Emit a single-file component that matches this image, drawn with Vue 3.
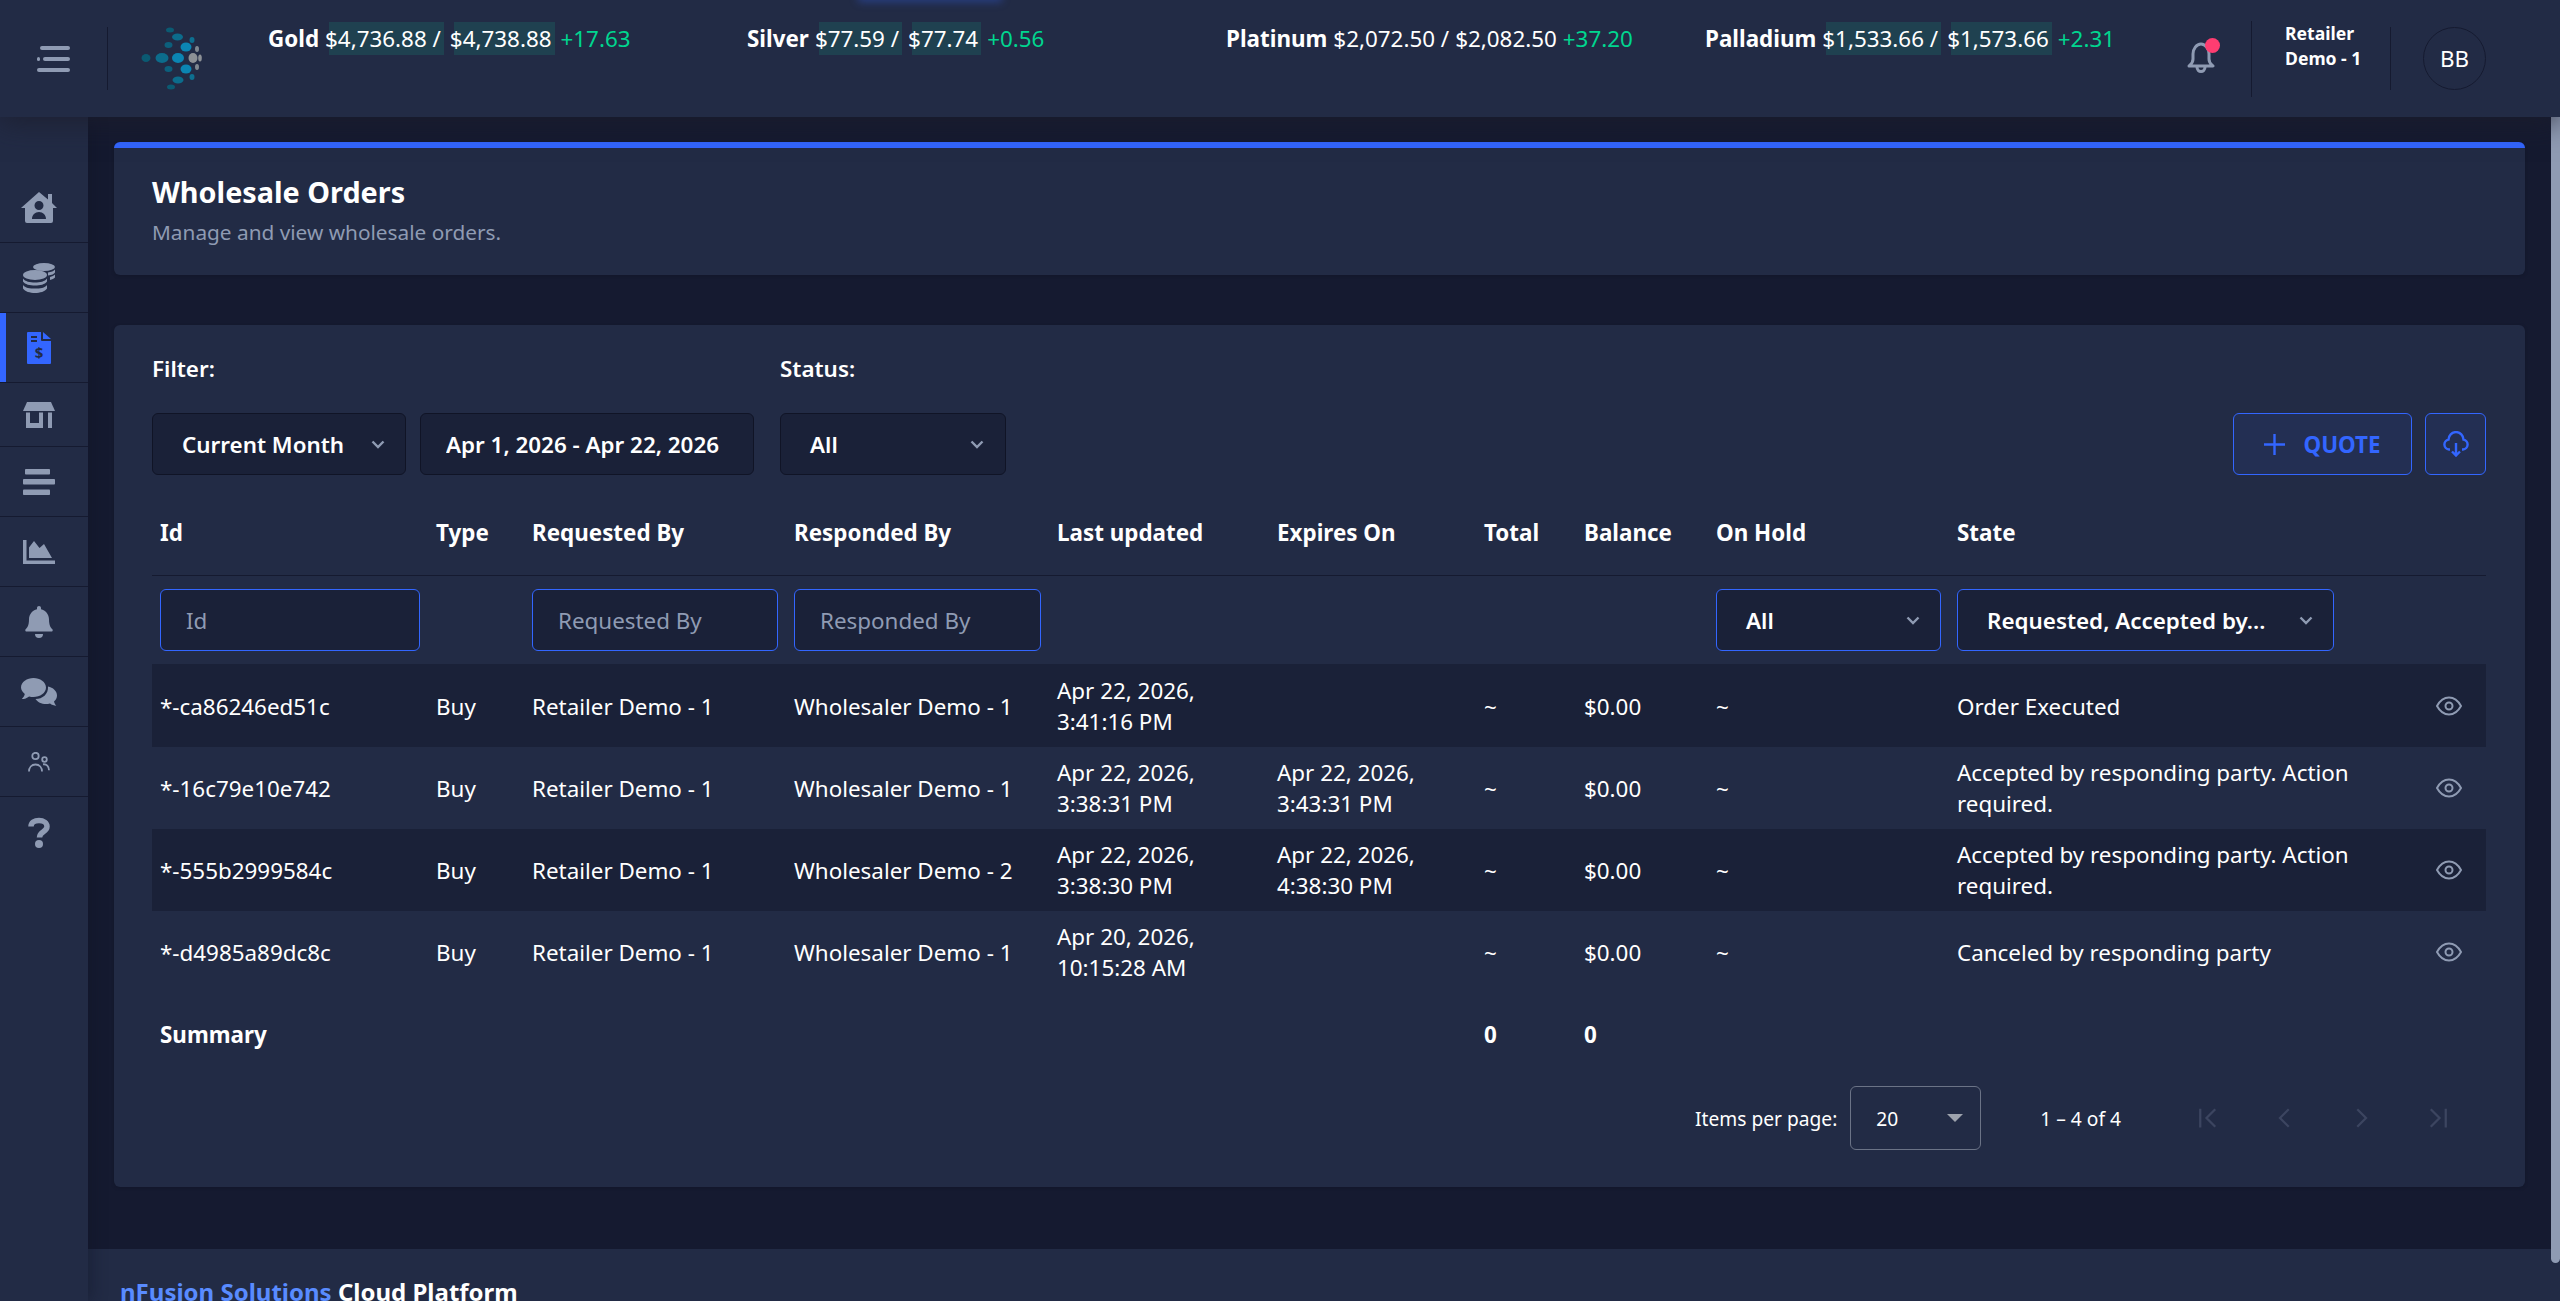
<template>
  <div class="app">
    <header class="topbar">
      <div class="topbar-glow"></div>
      <div class="menu-cell">
        <svg class="menu-icon" viewBox="0 0 33 26" width="33" height="26">
          <rect x="3" y="0" width="30" height="4" rx="2" />
          <rect x="0" y="11" width="3" height="4" rx="1.5" />
          <rect x="6" y="11" width="27" height="4" rx="2" />
          <rect x="0" y="22" width="33" height="4" rx="2" />
        </svg>
      </div>
      <svg class="logo" viewBox="0 0 64 66" width="64" height="66">
        <ellipse v-for="(d, i) in logoDots" :key="i" :cx="d[0]" :cy="d[1]" :rx="d[2]" :ry="d[3]" :fill="d[4]" />
      </svg>
      <div class="ticker">
        <div v-for="t in tickers" :key="t.name" class="ticker-item">
          <b>{{ t.name }}</b>
          <span :class="{ hl: t.hl }">{{ t.bid }} /</span>
          <span :class="{ hl: t.hl }">{{ t.ask }}</span>
          <span class="up">{{ t.change }}</span>
        </div>
      </div>
      <div class="bell-cell">
        <svg viewBox="0 0 28 31" width="28" height="31" fill="none" stroke="#8f9bb3" stroke-width="3" stroke-linejoin="round">
          <path d="M2 24c2-2 4-3 4-7v-5c0-5 3.500-10 8-10s8 5 8 10v5c0 4 2 5 4 7z" />
          <path d="M10 25c0 3 2 4.500 4 4.500s4-1.500 4-4.500" />
        </svg>
        <span class="bell-dot"></span>
      </div>
      <div class="user-name"><div>Retailer Demo - 1</div></div>
      <div class="avatar-cell">
        <div class="avatar">BB</div>
      </div>
    </header>

    <div class="body">
      <nav class="sidebar">
        <a v-for="item in navItems" :key="item.id" class="nav-item" :class="[{ active: item.id === 'orders' }, item.id]">
          <!-- home -->
          <svg v-if="item.id === 'home'" viewBox="0 0 36 31" width="36" height="31">
            <path fill-rule="evenodd" d="M18 0 27 7.500V2h4v9l5 5h-4v13a2 2 0 0 1-2 2H6a2 2 0 0 1-2-2V16H0zM18 9a4.500 4.500 0 1 0 0 9 4.500 4.500 0 0 0 0-9zM11 27h14c0-4-3-7-7-7s-7 3-7 7z" />
          </svg>
          <!-- coins -->
          <svg v-else-if="item.id === 'coins'" viewBox="0 0 32 30" width="32" height="30">
            <ellipse cx="21" cy="4" rx="11" ry="4" />
            <path d="M25 9.500c3-.5 6-1.500 7-3v3c-1 1.500-3 2.500-7 3zM27 14c2-.5 4-1.500 5-2.500v3c-1 1-3 2-5 2.500z" />
            <ellipse cx="12" cy="12" rx="12" ry="5" />
            <path d="M0 15.500c2 3 7 4 12 4s10-1 12-4v3c-2 3-7 4-12 4s-10-1-12-4zM0 22c2 3 7 3.500 12 3.500s10-.5 12-3.500v3.500c-2 3-7 4.500-12 4.500S2 28.500 0 25.500z" />
          </svg>
          <!-- invoice -->
          <svg v-else-if="item.id === 'orders'" viewBox="0 0 24 32" width="24" height="32" class="invoice">
            <path d="M0 1a1 1 0 0 1 1-1h13v8a1 1 0 0 0 1 1h9v22a1 1 0 0 1-1 1H1a1 1 0 0 1-1-1z" />
            <path d="M16 0l8 7h-8z" />
            <rect x="4" y="4" width="6" height="2" fill="#222b45" />
            <rect x="4" y="8" width="6" height="2" fill="#222b45" />
            <text x="12" y="26" text-anchor="middle" font-size="15" font-weight="700" fill="#222b45">$</text>
          </svg>
          <!-- store -->
          <svg v-else-if="item.id === 'store'" viewBox="0 0 32 26" width="32" height="26">
            <path d="M4 0h24l4 9H0z" />
            <path fill-rule="evenodd" d="M3 10.500h17V26H3zM7 10.500V21h9V10.500z" />
            <rect x="25" y="10.500" width="4" height="15.500" />
          </svg>
          <!-- list -->
          <svg v-else-if="item.id === 'list'" viewBox="0 0 32 26" width="32" height="26">
            <rect x="2" y="0" width="25" height="5.600" rx=".8" />
            <rect x="0" y="10" width="32" height="5.600" rx=".8" />
            <rect x="0" y="20.400" width="27" height="5.600" rx=".8" />
          </svg>
          <!-- chart -->
          <svg v-else-if="item.id === 'chart'" viewBox="0 0 32 24" width="32" height="24">
            <path d="M0 0h3.500v20.500H32V24H0z" />
            <path d="M6 18V7.500L11 1l5.500 7L21 4l8 14z" />
          </svg>
          <!-- bell -->
          <svg v-else-if="item.id === 'bell'" viewBox="0 0 28 32" width="28" height="32">
            <path d="M14 0c1.200 0 2 .9 2 2v1.300c4.500 1 8 5 8 10 0 6.500 2 8.500 3.400 10 .7.800.2 2.200-1 2.200H1.600c-1.200 0-1.700-1.400-1-2.200C2 22 4 20 4 13.300c0-5 3.500-9 8-10V2c0-1.100.8-2 2-2zM10 28h8a4 4 0 0 1-8 0z" />
          </svg>
          <!-- chat -->
          <svg v-else-if="item.id === 'chat'" viewBox="0 0 36 28" width="36" height="28">
            <path d="M12.500 0C19 0 25 4 25 9.500 25 15 19 19 12.500 19c-1.500 0-3-.2-4.400-.6C6 20 3.500 21 .8 21c1.500-1.500 2.500-3 3-5C1.700 14.300 0 12 0 9.500 0 4 6 0 12.500 0z" />
            <path d="M27 8.500c5 1 9 4.500 9 9 0 2.500-1.200 4.500-3 6 .4 1.800 1.400 3.200 2.400 4.300-2.500-.1-4.700-1-6.400-2.300-1.300.4-2.700.6-4 .6-4.500 0-8.500-2-10.500-5 7 0 13-5 12.500-12.600z" />
          </svg>
          <!-- people -->
          <svg v-else-if="item.id === 'people'" viewBox="0 0 22 20" width="22" height="20" class="outline">
            <circle cx="7.500" cy="4" r="3.200" />
            <circle cx="16.500" cy="7.500" r="2.300" />
            <path d="M1 19.500c0-4 2.500-7 6.500-7s6.500 3 6.500 7" />
            <path d="M15 12.300c3.500-.5 6 2 6 6" />
          </svg>
          <!-- help -->
          <svg v-else viewBox="0 0 22 31" width="22" height="31" class="help">
            <path d="M3 9.500C3 5.500 6.500 3.500 11 3.500s8 2.500 8 6c0 5.500-7.500 5-7.500 11" />
            <circle cx="11" cy="27" r="4" />
          </svg>
        </a>
      </nav>

      <div class="main">
        <div class="content">
          <section class="card title-card">
            <h1>Wholesale Orders</h1>
            <p>Manage and view wholesale orders.</p>
          </section>

          <section class="card orders-card">
            <div class="filter-bar">
              <div class="filter-group">
                <label>Filter:</label>
                <div class="filter-controls">
                  <div class="select period">
                    <span>Current Month</span>
                    <svg class="chevron" viewBox="0 0 14 9" width="14" height="9"><path d="M1.500 1.500 7 7l5.500-5.500" /></svg>
                  </div>
                  <input class="date-input" type="text" value="Apr 1, 2026 - Apr 22, 2026" readonly />
                </div>
              </div>
              <div class="filter-group">
                <label>Status:</label>
                <div class="select status">
                  <span>All</span>
                  <svg class="chevron" viewBox="0 0 14 9" width="14" height="9"><path d="M1.500 1.500 7 7l5.500-5.500" /></svg>
                </div>
              </div>
              <div class="actions">
                <button type="button" class="btn quote">
                  <svg viewBox="0 0 21 21" width="21" height="21"><path d="M10.500 0v21M0 10.500h21" /></svg>
                  QUOTE
                </button>
                <button type="button" class="btn download">
                  <svg viewBox="0 0 26 26" width="26" height="26">
                    <path d="M7 18.500H6A5 5 0 0 1 5.500 8.600 7.500 7.500 0 0 1 20.500 8.600 5 5 0 0 1 20 18.500h-1" />
                    <path d="M13 12v12M9 20.500l4 4 4-4" />
                  </svg>
                </button>
              </div>
            </div>

            <table class="orders-table">
              <colgroup>
                <col v-for="w in colWidths" :key="w.key" :style="{ width: w.width + 'px' }" />
              </colgroup>
              <thead>
                <tr class="head-row">
                  <th>Id</th>
                  <th>Type</th>
                  <th>Requested By</th>
                  <th>Responded By</th>
                  <th>Last updated</th>
                  <th>Expires On</th>
                  <th>Total</th>
                  <th>Balance</th>
                  <th>On Hold</th>
                  <th>State</th>
                  <th></th>
                </tr>
                <tr class="filter-row">
                  <td><input class="filter-input" placeholder="Id" /></td>
                  <td></td>
                  <td><input class="filter-input" placeholder="Requested By" /></td>
                  <td><input class="filter-input" placeholder="Responded By" /></td>
                  <td colspan="4"></td>
                  <td>
                    <div class="select outlined">
                      <span>All</span>
                      <svg class="chevron" viewBox="0 0 14 9" width="14" height="9"><path d="M1.500 1.500 7 7l5.500-5.500" /></svg>
                    </div>
                  </td>
                  <td>
                    <div class="select outlined state">
                      <span>Requested, Accepted by...</span>
                      <svg class="chevron" viewBox="0 0 14 9" width="14" height="9"><path d="M1.500 1.500 7 7l5.500-5.500" /></svg>
                    </div>
                  </td>
                  <td></td>
                </tr>
              </thead>
              <tbody>
                <tr v-for="row in orders" :key="row.id" class="data-row">
                  <td>{{ row.id }}</td>
                  <td>Buy</td>
                  <td>Retailer Demo - 1</td>
                  <td>{{ row.responded }}</td>
                  <td v-html="row.updated"></td>
                  <td v-html="row.expires"></td>
                  <td>~</td>
                  <td>$0.00</td>
                  <td>~</td>
                  <td>{{ row.state }}</td>
                  <td class="eye-cell">
                    <svg viewBox="0 0 26 20" width="26" height="20">
                      <path d="M1 10C4 4.500 8 1.500 13 1.500S22 4.500 25 10c-3 5.500-7 8.500-12 8.500S4 15.500 1 10z" />
                      <circle cx="13" cy="10" r="3.500" />
                    </svg>
                  </td>
                </tr>
              </tbody>
              <tfoot>
                <tr class="summary-row">
                  <td>Summary</td>
                  <td colspan="5"></td>
                  <td>0</td>
                  <td>0</td>
                  <td colspan="3"></td>
                </tr>
              </tfoot>
            </table>

            <div class="paginator">
              <span class="per-page">Items per page:</span>
              <div class="page-size">
                <span>20</span>
                <i class="caret"></i>
              </div>
              <span class="range">1 – 4 of 4</span>
              <div class="page-nav">
                <svg viewBox="0 0 24 24" width="30" height="30"><path d="M5 4.500v15M17 5l-7 7 7 7" /></svg>
                <svg viewBox="0 0 24 24" width="30" height="30"><path d="M15 5l-7 7 7 7" /></svg>
                <svg viewBox="0 0 24 24" width="30" height="30"><path d="M9 5l7 7-7 7" /></svg>
                <svg viewBox="0 0 24 24" width="30" height="30"><path d="M19 4.500v15M7 5l7 7-7 7" /></svg>
              </div>
            </div>
          </section>
        </div>

        <footer class="footer">
          <b><a>nFusion Solutions</a> Cloud Platform</b>
        </footer>
      </div>

      <div class="scrollbar"><div class="thumb"></div></div>
    </div>
  </div>
</template>

<script setup>
const logoDots = [
  [30, 4, 4, 2.5, '#0b5a72'], [37.5, 11, 5.5, 3.5, '#0c6c8c'], [52, 14, 2.5, 3, '#0d6f90'],
  [28.5, 19, 4, 3, '#0c5f7c'], [46, 21, 5.5, 4.5, '#0b85b3'], [57, 23, 2, 3, '#7f8790'],
  [6, 32, 4.5, 4, '#0b5a72'], [22, 32, 6.5, 5, '#0c6c8c'], [38, 32, 6, 5, '#0b85b3'], [53, 32, 4.5, 5, '#8d9196'], [60, 32, 1.8, 3.5, '#8d9196'],
  [28.5, 43, 4, 3, '#0c5f7c'], [46, 43, 5.5, 4.5, '#0b85b3'], [57, 41, 2, 3, '#7f8790'],
  [38, 54, 5.5, 3.5, '#0c6c8c'], [52, 51, 2.5, 3, '#0d6f90'], [31, 61, 4, 2.5, '#0b5a72']
]

const tickers = [
  { name: 'Gold', bid: '$4,736.88', ask: '$4,738.88', change: '+17.63', hl: true },
  { name: 'Silver', bid: '$77.59', ask: '$77.74', change: '+0.56', hl: true },
  { name: 'Platinum', bid: '$2,072.50', ask: '$2,082.50', change: '+37.20', hl: false },
  { name: 'Palladium', bid: '$1,533.66', ask: '$1,573.66', change: '+2.31', hl: true }
]

const navItems = [
  { id: 'home' }, { id: 'coins' }, { id: 'orders' }, { id: 'store' }, { id: 'list' },
  { id: 'chart' }, { id: 'bell' }, { id: 'chat' }, { id: 'people' }, { id: 'help' }
]

const colWidths = [276, 96, 262, 263, 220, 207, 100, 132, 241, 481, 56].map((width, key) => ({ key, width }))

const orders = [
  {
    id: '*-ca86246ed51c',
    responded: 'Wholesaler Demo - 1',
    updated: 'Apr 22, 2026,<br>3:41:16 PM',
    expires: '',
    state: 'Order Executed'
  },
  {
    id: '*-16c79e10e742',
    responded: 'Wholesaler Demo - 1',
    updated: 'Apr 22, 2026,<br>3:38:31 PM',
    expires: 'Apr 22, 2026,<br>3:43:31 PM',
    state: 'Accepted by responding party. Action required.'
  },
  {
    id: '*-555b2999584c',
    responded: 'Wholesaler Demo - 2',
    updated: 'Apr 22, 2026,<br>3:38:30 PM',
    expires: 'Apr 22, 2026,<br>4:38:30 PM',
    state: 'Accepted by responding party. Action required.'
  },
  {
    id: '*-d4985a89dc8c',
    responded: 'Wholesaler Demo - 1',
    updated: 'Apr 20, 2026,<br>10:15:28 AM',
    expires: '',
    state: 'Canceled by responding party'
  }
]
</script>

<style>
html,
body {
  margin: 0;
  background: #151a30;
  overflow: hidden;
}
</style>

<style scoped>
.app {
  width: 2560px;
  height: 1301px;
  overflow: hidden;
  display: flex;
  flex-direction: column;
  font-family: "Noto Sans", "Open Sans", sans-serif;
  font-size: 22.4px;
  color: #fff;
  background: #151a30;
}

/* top bar */
.topbar {
  position: relative;
  z-index: 2;
  flex: 0 0 117px;
  display: flex;
  align-items: center;
  background: #222b45;
  box-shadow: 0 6px 26px rgba(28, 30, 44, 0.75);
}

.topbar-glow {
  position: absolute;
  left: 860px;
  top: -6px;
  width: 140px;
  height: 6px;
  box-shadow: 0 0 8px 2px rgba(51, 102, 255, 0.35);
}

.menu-cell {
  width: 107px;
  height: 63px;
  display: flex;
  align-items: center;
  justify-content: center;
  border-right: 1px solid #151a30;
}

.menu-icon {
  fill: #8f9bb3;
}

.logo {
  margin-left: 32px;
}

.ticker {
  margin-left: 64px;
  align-self: flex-start;
  margin-top: 22px;
  display: grid;
  grid-template-columns: repeat(4, 479px);
}

.ticker-item {
  display: flex;
  gap: 6px;
  line-height: 33px;
  white-space: nowrap;
}

.ticker-item b {
  font-weight: 700;
}

.hl {
  padding-right: 3px;
  background: linear-gradient(#1f4150, #1f4150) no-repeat 4px 0 / calc(100% - 4px) 100%;
}

.up {
  color: #00d68f;
}

.bell-cell {
  position: relative;
  margin-left: 3px;
  width: 28px;
  height: 31px;
  margin-top: -2px;
}

.bell-cell svg {
  display: block;
}

.bell-dot {
  position: absolute;
  left: 18px;
  top: -4px;
  width: 15px;
  height: 15px;
  border-radius: 50%;
  background: #ff3d71;
}

.user-name {
  margin-left: 36px;
  box-sizing: border-box;
  width: 139px;
  height: 76px;
  padding-left: 33px;
  border-left: 1px solid #151a30;
  font-size: 17.6px;
  font-weight: 700;
  line-height: 25px;
}

.user-name div {
  width: 80px;
}

.avatar-cell {
  height: 63px;
  padding-left: 32px;
  border-left: 1px solid #151a30;
}

.avatar {
  width: 61px;
  height: 61px;
  border: 1px solid #151a30;
  border-radius: 50%;
  display: flex;
  align-items: center;
  justify-content: center;
  font-size: 22.4px;
}

/* body */
.body {
  flex: 1;
  min-height: 0;
  display: flex;
}

.sidebar {
  flex: 0 0 88px;
  padding-top: 56px;
  background: #222b45;
  box-shadow: 4px 0 14px rgba(16, 20, 38, 0.4);
  z-index: 1;
}

.nav-item {
  position: relative;
  height: 70px;
  display: flex;
  align-items: center;
  justify-content: center;
  padding-right: 10px;
  border-bottom: 1px solid #151a30;
  box-sizing: border-box;
  fill: #8f9bb3;
}

.nav-item.store {
  height: 64px;
}

.nav-item.help {
  border-bottom: 0;
}

.nav-item.active::before {
  content: '';
  position: absolute;
  left: 0;
  top: 0;
  bottom: 0;
  width: 6px;
  background: #3366ff;
}

.invoice {
  fill: #3366ff;
}

.outline {
  fill: none;
  stroke: #8f9bb3;
  stroke-width: 1.8;
}

.help {
  fill: #8f9bb3;
}

.help path {
  fill: none;
  stroke: #8f9bb3;
  stroke-width: 5.5;
}

.main {
  flex: 1;
  min-width: 0;
  display: flex;
  flex-direction: column;
}

.content {
  padding: 25px 26px 62px;
}

.card {
  background: #222b45;
  border-radius: 6px;
  box-shadow: 0 1px 3px rgba(16, 20, 38, 0.5);
}

.title-card {
  box-sizing: border-box;
  height: 133px;
  padding: 24px 38px 0;
  border-top: 6px solid #3366ff;
  margin-bottom: 50px;
}

.title-card h1 {
  margin: 0;
  font-size: 28.8px;
  font-weight: 700;
  line-height: 40px;
}

.title-card p {
  margin: 0;
  padding-top: 4px;
  font-size: 20.8px;
  line-height: 32px;
  color: #8f9bb3;
}

.orders-card {
  box-sizing: border-box;
  height: 862px;
  padding: 0 39px 0 38px;
}

.filter-bar {
  display: flex;
  align-items: flex-end;
  gap: 26px;
  padding-top: 26px;
}

.filter-group label {
  display: block;
  height: 62px;
  line-height: 36px;
  font-weight: 600;
}

.filter-controls {
  display: flex;
  gap: 14px;
}

.select {
  box-sizing: border-box;
  height: 62px;
  display: flex;
  align-items: center;
  justify-content: space-between;
  background: #1a2138;
  border: 1px solid #101426;
  border-radius: 6px;
  font-weight: 600;
  white-space: nowrap;
}

.chevron {
  flex: none;
  fill: none;
  stroke: #8f9bb3;
  stroke-width: 2.4;
}

.period {
  width: 254px;
  padding: 0 20px 0 29px;
}

.status {
  width: 226px;
  padding: 0 21px 0 29px;
}

.date-input {
  box-sizing: border-box;
  width: 334px;
  height: 62px;
  padding: 0 25px;
  background: #1a2138;
  border: 1px solid #101426;
  border-radius: 6px;
  font: 600 22.4px "Noto Sans", "Open Sans", sans-serif;
  color: #fff;
  outline: none;
}

.actions {
  margin-left: auto;
  display: flex;
  gap: 13px;
}

.btn {
  box-sizing: border-box;
  height: 62px;
  display: flex;
  align-items: center;
  justify-content: center;
  background: rgba(51, 102, 255, 0.08);
  border: 1px solid #3366ff;
  border-radius: 6px;
  color: #3366ff;
  font: 700 22.4px "Noto Sans", "Open Sans", sans-serif;
}

.btn svg {
  fill: none;
  stroke: #3366ff;
  stroke-width: 2.4;
}

.quote {
  width: 179px;
  gap: 18px;
}

.download {
  width: 61px;
  padding: 0;
}

.orders-table {
  width: 2334px;
  margin-top: 14px;
  border-collapse: collapse;
  table-layout: fixed;
}

.orders-table th,
.orders-table td {
  padding: 0 8px;
  text-align: left;
  vertical-align: middle;
  line-height: 31px;
}

.orders-table th {
  height: 86px;
  font-weight: 700;
  font-size: 22.4px;
  border-bottom: 1px solid #151a30;
}

.filter-row td {
  height: 88px;
  border-bottom: 1px solid #1a2138;
}

.filter-input {
  box-sizing: border-box;
  width: 100%;
  height: 62px;
  padding: 0 25px;
  background: #1a2138;
  border: 1px solid #3366ff;
  border-radius: 6px;
  font: 400 22.4px "Noto Sans", "Open Sans", sans-serif;
  color: #fff;
  outline: none;
}

.filter-input::placeholder {
  color: #8f9bb3;
  opacity: 1;
}

.outlined {
  border-color: #3366ff;
  padding: 0 20px 0 29px;
  font-weight: 600;
}

.outlined.state {
  width: 377px;
}

.data-row td {
  height: 82px;
}

.data-row:nth-child(odd) {
  background: #1a2138;
}

.eye-cell {
  text-align: right !important;
  padding-right: 24px !important;
  padding-left: 0 !important;
}

.eye-cell svg {
  display: block;
  margin-left: auto;
  fill: none;
  stroke: #8f9bb3;
  stroke-width: 2;
}

.summary-row td {
  height: 82px;
  font-weight: 700;
}

.paginator {
  display: flex;
  align-items: center;
  justify-content: flex-end;
  margin-top: 11px;
  padding-right: 34px;
  font-size: 19.2px;
}

.per-page {
  margin-right: 13px;
}

.page-size {
  box-sizing: border-box;
  width: 131px;
  height: 64px;
  padding: 0 17px 0 25px;
  display: flex;
  align-items: center;
  justify-content: space-between;
  border: 1px solid #6b7386;
  border-radius: 6px;
}

.caret {
  width: 0;
  height: 0;
  border-left: 8px solid transparent;
  border-right: 8px solid transparent;
  border-top: 8px solid #9ea3ad;
}

.range {
  margin-left: 59px;
  margin-right: 73px;
}

.page-nav {
  display: flex;
  gap: 46px;
}

.page-nav svg {
  display: block;
  fill: none;
  stroke: #3c4560;
  stroke-width: 1.8;
}

.footer {
  flex: 1;
  padding: 27px 32px;
  background: #222b45;
  font-size: 24px;
  line-height: 32px;
}

.footer b {
  font-weight: 700;
}

.footer a {
  color: #598bff;
}

.scrollbar {
  flex: 0 0 9px;
  background: #222b45;
}

.thumb {
  height: 1146px;
  border-radius: 0 0 5px 5px;
  background: #8f9bb3;
}
</style>
